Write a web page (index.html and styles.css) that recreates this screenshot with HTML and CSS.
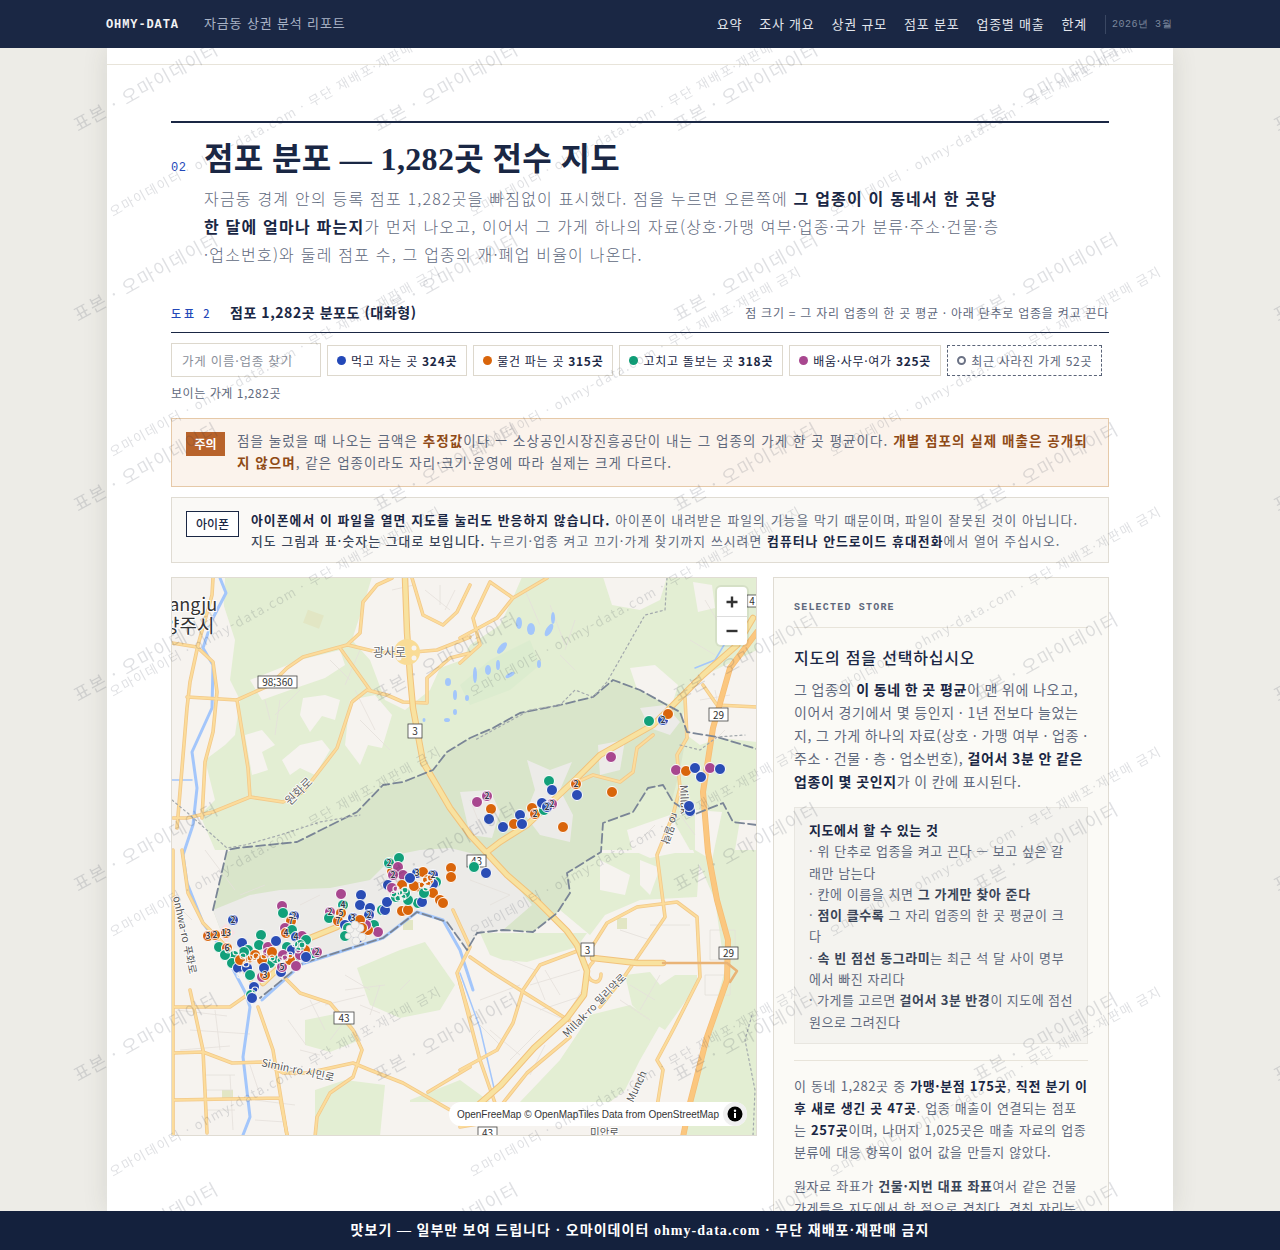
FILE: index.html
```html
<!DOCTYPE html>
<html lang="ko">
<head>
    <meta charset="UTF-8">
    <title>자금동 상권 분석 리포트</title>
    <link rel="stylesheet" href="styles.css">
</head>
<body>
    <header class="topbar">
        <div class="topbar-inner">
            <span class="brand">OHMY-DATA</span>
            <span class="report-name">자금동 상권 분석 리포트</span>
            <nav class="topnav">
                <a>요약</a><a>조사 개요</a><a>상권 규모</a><a>점포 분포</a><a>업종별 매출</a><a>한계</a>
            </nav>
            <span class="issue-date">2026년 3월</span>
        </div>
    </header>

    <main class="sheet">
        <div class="prev-end"></div>
        <section class="section">
            <div class="section-head">
                <span class="section-no">02</span>
                <h2>점포 분포 — 1,282곳 전수 지도</h2>
            </div>
            <p class="lede">자금동 경계 안의 등록 점포 1,282곳을 빠짐없이 표시했다. 점을 누르면 오른쪽에 <strong>그 업종이 이 동네서 한 곳당 한 달에 얼마나 파는지</strong>가 먼저 나오고, 이어서 그 가게 하나의 자료(상호·가맹 여부·업종·국가 분류·주소·건물·층·업소번호)와 둘레 점포 수, 그 업종의 개·폐업 비율이 나온다.</p>

            <div class="fig-head">
                <span class="fig-no">도표 2</span>
                <span class="fig-title">점포 1,282곳 분포도 (대화형)</span>
                <span class="fig-note">점 크기 = 그 자리 업종의 한 곳 평균 · 아래 단추로 업종을 켜고 끈다</span>
            </div>

            <div class="filters">
                <input class="store-search" type="text" placeholder="가게 이름·업종 찾기">
                <button class="chip"><i class="dot food"></i><span>먹고 자는 곳 <b>324곳</b></span></button>
                <button class="chip"><i class="dot retail"></i><span>물건 파는 곳 <b>315곳</b></span></button>
                <button class="chip"><i class="dot care"></i><span>고치고 돌보는 곳 <b>318곳</b></span></button>
                <button class="chip"><i class="dot misc"></i><span>배움·사무·여가 <b>325곳</b></span></button>
                <button class="chip chip-closed"><i class="dot closed"></i><span>최근 사라진 가게 52곳</span></button>
            </div>
            <div class="visible-count">보이는 가게 1,282곳</div>

            <div class="notice notice-warn">
                <span class="notice-tag">주의</span>
                <p>점을 눌렀을 때 나오는 금액은 <strong>추정값</strong>이다 — 소상공인시장진흥공단이 내는 그 업종의 가게 한 곳 평균이다. <strong>개별 점포의 실제 매출은 공개되지 않으며</strong>, 같은 업종이라도 자리·크기·운영에 따라 실제는 크게 다르다.</p>
            </div>
            <div class="notice notice-phone">
                <span class="notice-tag">아이폰</span>
                <p><strong>아이폰에서 이 파일을 열면 지도를 눌러도 반응하지 않습니다.</strong> 아이폰이 내려받은 파일의 기능을 막기 때문이며, 파일이 잘못된 것이 아닙니다. <em>지도 그림과 표·숫자는 그대로 보입니다.</em> 누르기·업종 켜고 끄기·가게 찾기까지 쓰시려면 <strong>컴퓨터나 안드로이드 휴대전화</strong>에서 열어 주십시오.</p>
            </div>

            <div class="map-layout">
                <div class="map">
                    <svg class="map-canvas" viewBox="171 577 586 559" xmlns="http://www.w3.org/2000/svg">
                        <defs>
                            <g id="roads-minor">
                                <path d="M205 850l30 40M172 900l20 20M177 1010l50 6M190 1030l60 4M180 1050l50-4M215 1010l5 40M230 1075l3 55M205 1075h30M205 1090h28M205 1110h30M250 1065l10 30M255 1100l40 5M255 1120l30 2M288 1020l18 25M300 1010l20-8M310 1000l15 30M325 1005l40-10M345 990l40-5M345 975l25 15M360 1005l20 8M380 985l-10 30M400 990l10-10M300 1050l20 5M330 1040l15-20"/>
                                <path d="M480 1000l40-15M510 960l25 10M530 985l50-15M535 975l10 25M545 970l15 25M520 1000l45 20M490 1030l30 25M500 1045l-20-20M510 1060l30-30M530 1075l15-30M540 1010l45-15M585 985l-15 25M630 985l25 15M640 1010l20-35M620 1000l30 20M650 925l40 0M620 930l30 10M710 930h25v30h-25zM705 975h25v20h-25z"/>
                                <path d="M392 590l22-5M425 590l25 20M440 585v20M455 590l-10 20M360 650l-15 35M330 660l20 20M300 690l-25 25M265 700l5 20M280 700l-5 35M355 690l20 40M360 720l30 30M525 590l15 35M550 605l15 40M575 620l-10 30M560 655l15 15M705 600l15 25M690 640l25 15M700 700l30-5M715 690l5 25M725 730l-10 10"/>
                                <path d="M470 800l10 25M480 845l20 20M470 880l40 15M490 905l20-10M680 815l15 20M640 840l15-15M300 905l20-10M240 895l25-10"/>
                            </g>
                            <g id="roads-second">
                                <path d="M213 578l-1 17-14 50-8 37-3 26-7 84-3 36"/>
                                <path d="M172 643l25 4 16 15 4 30-4 40-8 30-3 56"/>
                                <path d="M187 697l50 3 33-15 17-17 16-11 44-12 13-12 3-31 14-17 15-7"/>
                                <path d="M237 700l11 68 2 29 33 5 20-10 34-44 15-46 15-12 20 5 16 7 24 1v-25l23-20 20-5"/>
                                <path d="M340 648l30 42"/>
                                <path d="M348 645l29 7 26 1 34-3 33-13"/>
                                <path d="M250 797l-37 15-26 6h-14"/>
                                <path d="M412 578l11 37 20 10 14-13 13-27"/>
                                <path d="M460 638l37-20 16-20 34-20M490 582l23 16M490 582l-17 36 7 27-20 18"/>
                                <path d="M685 698l2 40-10 17 3 33-7 27-16 40 8 62-41 60-24 30"/>
                                <path d="M703 685l14 20 40 2"/>
                                <path d="M653 735l-16 13-4 24-13 10-27-7-16 7"/>
                                <path d="M182 850l6 43 15 30 20 20 29 39"/>
                                <path d="M172 1007h58l20-14M258 1007l15 43 14 85"/>
                                <path d="M285 978l15 15 30 10 23 27 9 20-9 27-23 16-13 24-2 20"/>
                                <path d="M172 1053l31-1 29 11 31-1 20 11h24l46-10 17 7 33 13 47 27"/>
                                <path d="M190 990l13 60 4 83M173 1100l107-2M280 1098l7 37M173 850v287"/>
                                <path d="M428 1092l42-25M453 910l17 37-13 26 13 44M470 957l23 16 80 50"/>
                                <path d="M580 950l-40 15-17 25-10 33-16 27-37 20"/>
                                <path d="M590 950l17-27 30-16 40-5 20 15 3 60-27 53-16 30 6 10-6 37"/>
                                <path d="M570 1037l-43 36-24 30M460 983l20 77 15 43M460 1127l30-5"/>
                                <path d="M593 962c-6 6-8 12-2 18 6 4 10 1 10-6"/>
                            </g>
                            <g id="roads-trunk">
                                <path d="M405 578l2 54 3 43 3 33 10 54 27 46 20 27 37 40 30 26 30 30 10 14 10 26-3 24-17 23-33 30-33 37-25 22"/>
                                <path d="M487 852l13-10 27-17 50-47 23-23 53-30 20-20 30-30 34-30 16-27"/>
                                <path d="M593 958l44 5h26"/>
                                <path d="M263 983l47-45 27-11"/>
                            </g>
                        </defs>

                        <rect class="land" x="171" y="577" width="586" height="559"/>

                        <!-- wood -->
                        <path class="wood" d="M225 577H757V850H171V815L205 800 210 700 222 640Z"/>
                        <path class="wood" d="M693 850H757V1136H683L700 1060 725 970 715 900Z"/>
                        <path class="wood" d="M480 933H587L577 947 527 962 503 960 490 955Z"/>
                        <path class="wood" d="M555 853H700L697 897 640 900 605 915 590 935 560 910 540 885Z"/>
                        <path class="wood" d="M625 975L650 972 660 985 675 975 697 975 697 985 665 1030 645 1018 632 1005Z"/>
                        <path class="wood" d="M590 1015L630 1005 660 1025 640 1060 625 1090 610 1102H520L560 1060Z"/>
                        <path class="wood" d="M357 968L400 950 425 942 455 985 440 1010 400 1018 370 1005Z"/>
                        <path class="wood" d="M305 1020L345 1012 360 1040 330 1052 305 1045Z"/>
                        <path class="wood" d="M315 1090L345 1080 385 1085 380 1136H315Z"/>
                        <path class="wood" d="M410 1100L460 1080 490 1102H410Z"/>
                        <path class="wood" d="M205 760L225 745 240 790 210 810Z"/>

                        <!-- built-up patches cut into the wood -->
                        <path class="land" d="M372 577H522L512 600 500 625 470 645 462 660 440 668 430 690 405 710 385 700 370 660 352 640 365 600Z"/>
                        <path class="land" d="M171 577H225L222 600 235 640 230 680 240 700 235 735 225 745 205 760 215 800 200 815 215 850H171Z"/>
                        <path class="land" d="M250 680L300 660 340 650 345 665 325 678 290 690 262 700Z"/>
                        <path class="land" d="M303 698L325 695 340 700 335 720 322 716 310 732 300 715Z"/>
                        <path class="land" d="M300 745L322 740 330 750 315 775 300 768 290 775 282 760Z"/>
                        <path class="land" d="M245 735L262 730 275 745 262 752 268 770 252 775Z"/>
                        <path class="land" d="M350 700L375 695 392 715 382 748 368 745 360 765 345 745Z"/>
                        <path class="land" d="M603 577H667L660 600 640 610 612 605Z"/>
                        <path class="land" d="M693 582L712 585 715 608 698 612Z"/>
                        <path class="land" d="M630 668L655 665 678 685 672 705 650 697 638 692Z"/>
                        <path class="land" d="M690 682L757 650V742L720 738 700 745 680 730Z"/>
                        <path class="land" d="M590 740L615 735 640 745 628 765 600 770Z"/>
                        <path class="land" d="M627 830L670 815 690 850 650 858 632 850Z"/>
                        <path class="land" d="M695 810L722 812 712 860 695 850Z"/>
                        <path class="land" d="M740 820H757V850H735Z"/>
                        <path class="land" d="M600 860L630 875 625 895 600 890Z"/>
                        <path class="land" d="M640 860L660 868 650 895 640 885Z"/>

                        <!-- park -->
                        <path class="park" d="M227 852L237 848 297 842 337 822 357 812 383 785 403 782 433 770 447 752 470 738 493 728 520 713 560 705 593 697 613 680 640 690 667 705 680 712 687 732 680 770 672 800 663 785 648 788 633 812 603 823 601 852 567 873 570 893 557 913 533 932 503 930 477 933 467 950 447 922 417 912 383 938 303 963 260 998 228 950 213 910Z"/>
                        <path class="town" d="M213 910L250 895 280 890 330 888 370 880 395 855 420 850 450 848 490 858 510 878 532 905 503 930 477 933 467 950 447 922 417 912 383 938 303 963 260 998 228 950Z"/>
                        <path class="town" d="M460 792L490 790 500 812 492 838 470 835Z"/>
                        <path class="town" d="M527 760L550 770 572 762 560 790 573 815 570 842 540 835 525 815 535 790Z"/>
                        <path class="town" d="M640 708L665 705 680 722 670 735 650 728Z"/>
                        <path class="town" d="M598 745L625 740 620 770 600 775Z"/>

                        <path class="golf" d="M460 685L490 660 530 640 540 665 510 690 470 705Z"/>
                        <rect class="pitch" x="305" y="612" width="17" height="14" transform="rotate(20 313 619)"/>
                        <rect class="pitch" x="617" y="918" width="10" height="11"/>
                        <rect class="pitch" x="403" y="920" width="10" height="10"/>
                        <rect class="pitch" x="222" y="1090" width="11" height="10"/>
                        <rect class="clinic" x="220" y="926" width="13" height="13" transform="rotate(45 226 932)"/>

                        <use href="#roads-minor" class="road-minor"/>

                        <!-- water -->
                        <path class="river" d="M220 578l6 15-13 25-10 30 10 17-1 43-20 44 5 36-4 37-10 30 4 28 16 40 20 27 22 42 5 15-7 50 7 60-7 18"/>
                        <path class="river" d="M262 1000l40-36 81-26 34-26 26 8 17 30 13 40"/>
                        <path class="river river-thin" d="M172 780h20M750 620l-20 15-15 25-20 8M460 973l20 55 14 60"/>
                        <g class="pond">
                            <ellipse cx="519" cy="623" rx="3" ry="6"/><ellipse cx="531" cy="629" rx="4" ry="6"/><ellipse cx="549" cy="630" rx="3" ry="7" transform="rotate(30 549 630)"/><ellipse cx="553" cy="618" rx="2" ry="6"/><ellipse cx="502" cy="648" rx="3" ry="7" transform="rotate(40 502 648)"/><ellipse cx="475" cy="675" rx="2" ry="8"/><ellipse cx="488" cy="670" rx="3" ry="5"/><ellipse cx="498" cy="665" rx="2" ry="5"/><ellipse cx="510" cy="675" rx="5" ry="2" transform="rotate(-30 510 675)"/><ellipse cx="539" cy="664" rx="2" ry="4"/><ellipse cx="467" cy="698" rx="2" ry="3"/><ellipse cx="448" cy="682" rx="3" ry="4"/><ellipse cx="455" cy="695" rx="2" ry="5"/><ellipse cx="455" cy="712" rx="2" ry="3"/><ellipse cx="447" cy="720" rx="3" ry="2"/><ellipse cx="424" cy="720" rx="1.5" ry="2"/>
                        </g>

                        <use href="#roads-second" class="road-second-case"/>
                        <use href="#roads-second" class="road-second"/>
                        <use href="#roads-trunk" class="road-trunk-case"/>
                        <use href="#roads-trunk" class="road-trunk"/>
                        <path class="road-big-case" d="M757 632l-27 36-17 60-10 64 5 60 9 48 11 40-1 40-20 57-17 66-7 34"/>
                        <path class="road-big" d="M757 632l-27 36-17 60-10 64 5 60 9 48 11 40-1 40-20 57-17 66-7 34"/>
                        <path class="road-ramp" d="M663 963h64l10 8-7 11"/>
                        <circle class="road-hub" cx="407" cy="652" r="13"/>
                        <circle class="road-hole" cx="399" cy="648" r="2.5"/><circle class="road-hole" cx="414" cy="648" r="2.5"/><circle class="road-hole" cx="399" cy="658" r="2.5"/><circle class="road-hole" cx="414" cy="658" r="2.5"/>

                        <!-- boundaries -->
                        <path class="line-dash" d="M213 910L227 850 237 848 297 842 337 822 357 812 383 785 403 782 433 770 447 752 470 738 493 728 520 713 560 705 593 697 613 680 640 690 667 705 680 712 687 732 717 737 757 749"/>
                        <path class="line-dash" d="M757 825L733 822 723 803 693 815 673 802 663 785 648 788 633 812 603 823 601 852 567 873 570 893 557 913 533 932 503 930 477 933 467 950 447 922 417 912 383 938 303 963 260 998"/>
                        <path class="line-dot" d="M667 578L665 610 645 615 607 682 593 697 575 690 560 705 530 710 475 740M172 800L190 815 227 848 245 845 280 835 320 822 360 815M680 745L700 750 717 737 745 735M752 1015L745 1040 755 1090 753 1136"/>

                        <!-- labels -->
                        <text class="place" x="161" y="611">Yangju</text>
                        <text class="place place-ko" x="162" y="633">양주시</text>
                        <text class="road-name" x="373" y="657">광사로</text>
                        <text class="road-name" transform="translate(290 806) rotate(-45)">원화로</text>
                        <text class="road-name small" transform="translate(261 1066) rotate(12)">Simin-ro 시민로</text>
                        <text class="road-name small" transform="translate(567 1038) rotate(-45)">Millak-ro 밀리악로</text>
                        <text class="road-name small" transform="translate(633 1103) rotate(-65)">Munch</text>
                        <text class="road-name small" transform="translate(680 785) rotate(88)">Millak</text>
                        <text class="road-name small" transform="translate(672 812) rotate(110)">ro 밀락</text>
                        <text class="road-name small" transform="translate(173 897) rotate(78)">onhwa-ro 푸화로</text>
                        <text class="road-name small" x="590" y="1136">미안로</text>

                        <g class="shields">
                            <rect x="258" y="676" width="39" height="12"/><text x="277.5" y="686">98;360</text>
                            <rect x="408" y="724" width="14" height="14"/><text x="415" y="735">3</text>
                            <rect x="709" y="708" width="19" height="13"/><text x="718.5" y="718.500">29</text>
                            <rect x="334" y="1012" width="20" height="12"/><text x="344" y="1022">43</text>
                            <rect x="581" y="943" width="13" height="13"/><text x="587.500" y="953.500">3</text>
                            <rect x="719" y="947" width="19" height="12"/><text x="728.500" y="957">29</text>
                            <rect x="467" y="855" width="19" height="12"/><text x="476.500" y="865">43</text>
                            <rect x="478" y="1127" width="19" height="12"/><text x="487.500" y="1137">43</text>
                            <rect x="747" y="595" width="14" height="12"/><text x="752" y="605">4</text>
                        </g>

                        <!-- stores -->
                        <g class="stores">
                            <circle class="b" cx="663" cy="720" r="5"/><circle class="o" cx="668" cy="714" r="5"/><circle class="g" cx="649" cy="721" r="5"/>
                            <circle class="m" cx="611" cy="757" r="5"/><circle class="m" cx="676" cy="770" r="5"/><circle class="o" cx="686" cy="771" r="5"/><circle class="b" cx="695" cy="768" r="5"/><circle class="b" cx="701" cy="777" r="5"/><circle class="m" cx="710" cy="768" r="5"/><circle class="b" cx="720" cy="769" r="5"/>
                            <circle class="b" cx="690" cy="811" r="5"/><circle class="b" cx="689" cy="806" r="5"/>
                            <circle class="g" cx="549" cy="781" r="5"/><circle class="b" cx="552" cy="790" r="5"/><circle class="o" cx="576" cy="784" r="5"/><circle class="b" cx="577" cy="795" r="5"/><circle class="o" cx="612" cy="792" r="5"/><circle class="o" cx="563" cy="827" r="5"/>
                            <circle class="m" cx="477" cy="802" r="5"/><circle class="m" cx="487" cy="796" r="5"/><circle class="o" cx="491" cy="809" r="5"/><circle class="b" cx="489" cy="819" r="5"/><circle class="b" cx="503" cy="827" r="5"/><circle class="o" cx="514" cy="824" r="5"/><circle class="b" cx="520" cy="815" r="5"/><circle class="b" cx="522" cy="824" r="5"/><circle class="o" cx="532" cy="808" r="5"/><circle class="o" cx="535" cy="814" r="5"/><circle class="g" cx="544" cy="810" r="5"/><circle class="b" cx="542" cy="803" r="5"/><circle class="m" cx="552" cy="804" r="5"/><circle class="b" cx="547" cy="807" r="5"/>
                            <circle class="g" cx="474" cy="867" r="5"/><circle class="b" cx="486" cy="873" r="5"/><circle class="o" cx="451" cy="868" r="5"/><circle class="o" cx="451" cy="877" r="5"/>

                            <circle class="o" cx="392" cy="872" r="5"/><circle class="g" cx="399" cy="858" r="5"/><circle class="g" cx="389" cy="863" r="5"/><circle class="m" cx="398" cy="867" r="5"/><circle class="m" cx="403" cy="875" r="5"/><circle class="m" cx="393" cy="875" r="5"/><circle class="b" cx="388" cy="885" r="5"/><circle class="b" cx="417" cy="873" r="5"/><circle class="o" cx="423" cy="872" r="5"/><circle class="b" cx="433" cy="875" r="5"/><circle class="g" cx="436" cy="882" r="5"/><circle class="b" cx="433" cy="884" r="5"/><circle class="o" cx="420" cy="887" r="5"/><circle class="o" cx="433" cy="893" r="5"/><circle class="o" cx="440" cy="900" r="5"/><circle class="o" cx="443" cy="903" r="5"/><circle class="o" cx="414" cy="886" r="5"/><circle class="g" cx="418" cy="903" r="5"/><circle class="b" cx="422" cy="902" r="5"/><circle class="o" cx="402" cy="911" r="5"/><circle class="o" cx="408" cy="910" r="5"/><circle class="g" cx="408" cy="900" r="5"/><circle class="g" cx="382" cy="910" r="5"/><circle class="b" cx="385" cy="910" r="5"/><circle class="b" cx="387" cy="902" r="5"/><circle class="m" cx="395" cy="895" r="5"/><circle class="o" cx="402" cy="885" r="5"/><circle class="g" cx="396" cy="897" r="5"/>
                            <circle class="o" cx="428" cy="880" r="5"/><circle class="g" cx="424" cy="893" r="5"/><circle class="b" cx="410" cy="878" r="5"/><circle class="m" cx="392" cy="888" r="5"/><circle class="g" cx="405" cy="893" r="5"/>

                            <circle class="m" cx="341" cy="894" r="5"/><circle class="b" cx="361" cy="895" r="5"/><circle class="b" cx="360" cy="905" r="5"/><circle class="b" cx="370" cy="908" r="5"/><circle class="g" cx="343" cy="905" r="5"/><circle class="m" cx="330" cy="912" r="5"/><circle class="g" cx="329" cy="918" r="5"/><circle class="o" cx="341" cy="913" r="5"/><circle class="o" cx="338" cy="921" r="5"/><circle class="b" cx="369" cy="915" r="5"/><circle class="b" cx="353" cy="918" r="5"/><circle class="g" cx="374" cy="925" r="5"/><circle class="m" cx="378" cy="932" r="5"/><circle class="o" cx="368" cy="930" r="5"/><circle class="m" cx="366" cy="925" r="5"/><circle class="b" cx="345" cy="925" r="5"/><circle class="o" cx="360" cy="920" r="5"/>
                            <circle class="g" cx="348" cy="928" r="5"/><circle class="o" cx="362" cy="928" r="5"/><circle class="b" cx="358" cy="938" r="5"/><circle class="g" cx="345" cy="936" r="5"/>

                            <circle class="m" cx="282" cy="906" r="5"/><circle class="g" cx="283" cy="913" r="5"/><circle class="b" cx="294" cy="916" r="5"/><circle class="o" cx="291" cy="921" r="5"/><circle class="m" cx="285" cy="928" r="5"/><circle class="o" cx="286" cy="933" r="5"/><circle class="g" cx="292" cy="930" r="5"/><circle class="b" cx="296" cy="937" r="5"/><circle class="m" cx="302" cy="936" r="5"/><circle class="g" cx="306" cy="940" r="5"/><circle class="b" cx="233" cy="920" r="5"/>
                            <circle class="o" cx="208" cy="936" r="5"/><circle class="o" cx="215" cy="935" r="5"/><circle class="o" cx="226" cy="933" r="5"/><circle class="g" cx="219" cy="947" r="5"/><circle class="b" cx="242" cy="943" r="5"/><circle class="g" cx="261" cy="935" r="5"/><circle class="g" cx="259" cy="945" r="5"/><circle class="m" cx="268" cy="947" r="5"/><circle class="b" cx="276" cy="941" r="5"/><circle class="g" cx="287" cy="947" r="5"/><circle class="o" cx="227" cy="948" r="5"/><circle class="g" cx="234" cy="956" r="5"/><circle class="g" cx="232" cy="963" r="5"/><circle class="m" cx="268" cy="953" r="5"/>
                            <circle class="g" cx="313" cy="953" r="5"/><circle class="m" cx="317" cy="952" r="5"/><circle class="m" cx="262" cy="977" r="5"/><circle class="o" cx="265" cy="975" r="5"/><circle class="b" cx="281" cy="972" r="5"/><circle class="m" cx="282" cy="967" r="5"/><circle class="g" cx="248" cy="950" r="5"/><circle class="o" cx="248" cy="958" r="5"/><circle class="b" cx="238" cy="968" r="5"/><circle class="b" cx="247" cy="968" r="5"/><circle class="g" cx="250" cy="975" r="5"/><circle class="b" cx="254" cy="987" r="5"/><circle class="g" cx="251" cy="995" r="5"/><circle class="b" cx="252" cy="998" r="5"/><circle class="g" cx="270" cy="963" r="5"/><circle class="o" cx="255" cy="955" r="5"/><circle class="g" cx="295" cy="958" r="5"/><circle class="b" cx="292" cy="950" r="5"/><circle class="o" cx="290" cy="960" r="5"/><circle class="m" cx="296" cy="966" r="5"/><circle class="g" cx="276" cy="958" r="5"/><circle class="o" cx="305" cy="950" r="5"/><circle class="m" cx="300" cy="955" r="5"/><circle class="b" cx="306" cy="957" r="5"/>
                            <circle class="o" cx="240" cy="960" r="5"/><circle class="g" cx="244" cy="952" r="5"/><circle class="o" cx="262" cy="960" r="5"/><circle class="m" cx="283" cy="955" r="5"/><circle class="g" cx="225" cy="955" r="5"/><circle class="o" cx="272" cy="952" r="5"/><circle class="g" cx="300" cy="945" r="5"/><circle class="b" cx="264" cy="968" r="5"/>

                            <!-- overlapping spots, dense blobs of white rim -->
                            <g class="rims">
                                <circle cx="425" cy="880" r="3"/><circle cx="428" cy="884" r="3"/><circle cx="422" cy="885" r="3"/><circle cx="426" cy="888" r="3"/><circle cx="430" cy="878" r="3"/>
                                <circle cx="396" cy="889" r="3"/><circle cx="400" cy="893" r="3"/><circle cx="394" cy="894" r="3"/><circle cx="398" cy="898" r="3"/><circle cx="403" cy="897" r="3"/><circle cx="405" cy="890" r="3"/>
                                <circle class="solid" cx="355" cy="933" r="5"/><circle class="solid" cx="350" cy="929" r="4"/><circle class="solid" cx="360" cy="928" r="4"/><circle class="solid" cx="348" cy="936" r="3"/><circle class="solid" cx="362" cy="937" r="4"/><circle class="solid" cx="355" cy="925" r="4"/><circle class="solid" cx="356" cy="941" r="4"/>
                                <circle cx="295" cy="944" r="3"/><circle cx="298" cy="950" r="3"/><circle cx="290" cy="955" r="3"/><circle cx="285" cy="958" r="3"/><circle cx="280" cy="960" r="3"/><circle cx="272" cy="958" r="3"/><circle cx="264" cy="956" r="3"/><circle cx="256" cy="956" r="3"/><circle cx="250" cy="958" r="3"/><circle cx="243" cy="956" r="3"/><circle cx="236" cy="952" r="3"/><circle cx="228" cy="950" r="3"/><circle cx="302" cy="945" r="3"/><circle cx="246" cy="964" r="3"/><circle cx="240" cy="975" r="3"/><circle cx="255" cy="990" r="3"/>
                            </g>

                            <g class="counts">
                                <text x="663" y="723">2</text><text x="576" y="787">2</text><text x="487" y="799">2</text><text x="535" y="817">2</text><text x="547" y="810">2</text><text x="552" y="807">2</text>
                                <text x="389" y="866">2</text><text x="393" y="878">2</text><text x="433" y="878">2</text><text x="417" y="876">3</text><text x="369" y="918">2</text><text x="353" y="921">3</text><text x="343" y="908">4</text><text x="338" y="924">7</text><text x="341" y="916">5</text><text x="330" y="915">2</text>
                                <text x="233" y="923">2</text><text x="208" y="939">3</text><text x="215" y="938">2</text><text x="226" y="936">13</text><text x="294" y="919">2</text><text x="291" y="924">7</text><text x="286" y="936">4</text><text x="265" y="978">3</text><text x="282" y="970">5</text><text x="317" y="955">2</text><text x="296" y="940">4</text><text x="227" y="951">6</text>
                            </g>
                        </g>
                    </svg>
                    <div class="zoom-ctrl">
                        <button class="zoom-btn">
                            <svg width="14" height="14" viewBox="0 0 14 14"><path d="M7 1.500v11M1.500 7h11"/></svg>
                        </button>
                        <button class="zoom-btn">
                            <svg width="14" height="14" viewBox="0 0 14 14"><path d="M1.500 7h11"/></svg>
                        </button>
                    </div>
                    <div class="attrib">
                        <span>OpenFreeMap © OpenMapTiles Data from OpenStreetMap</span>
                        <span class="attrib-btn">
                            <svg width="16" height="16" viewBox="0 0 16 16"><circle cx="8" cy="8" r="7.500"/><rect class="ink" x="7" y="7" width="2" height="5"/><circle class="ink" cx="8" cy="4.800" r="1.200"/></svg>
                        </span>
                    </div>
                </div>

                <aside class="store-panel">
                    <div class="panel-kicker">SELECTED STORE</div>
                    <h3>지도의 점을 선택하십시오</h3>
                    <p class="panel-text">그 업종의 <strong>이 동네 한 곳 평균</strong>이 맨 위에 나오고, 이어서 경기에서 몇 등인지 · 1년 전보다 늘었는지, 그 가게 하나의 자료(상호 · 가맹 여부 · 업종 · 주소 · 건물 · 층 · 업소번호), <strong>걸어서 3분 안 같은 업종이 몇 곳인지</strong>가 이 칸에 표시된다.</p>
                    <div class="howto">
                        <div class="howto-title">지도에서 할 수 있는 것</div>
                        <div>· 위 단추로 업종을 켜고 끈다 — 보고 싶은 갈래만 남는다</div>
                        <div>· 칸에 이름을 치면 <b>그 가게만 찾아 준다</b></div>
                        <div>· <b>점이 클수록</b> 그 자리 업종의 한 곳 평균이 크다</div>
                        <div>· <b>속 빈 점선 동그라미</b>는 최근 석 달 사이 명부에서 빠진 자리다</div>
                        <div class="howto-tight">· 가게를 고르면 <b>걸어서 3분 반경</b>이 지도에 점선 원으로 그려진다</div>
                    </div>
                    <p class="panel-note">이 동네 1,282곳 중 <strong>가맹·분점 175곳</strong>, <strong>직전 분기 이후 새로 생긴 곳 47곳</strong>. 업종 매출이 연결되는 점포는 <strong>257곳</strong>이며, 나머지 1,025곳은 매출 자료의 업종 분류에 대응 항목이 없어 값을 만들지 않았다.</p>
                    <p class="panel-note">원자료 좌표가 <b>건물·지번 대표 좌표</b>여서 같은 건물 가게들은 지도에서 한 점으로 겹친다. 겹친 자리는 숫자로 표시했다.</p>
                </aside>
            </div>
        </section>
    </main>

    <footer class="preview-bar">맛보기 — 일부만 보여 드립니다 · 오마이데이터 ohmy-data.com · 무단 재배포·재판매 금지</footer>

    <svg class="watermark" width="1280" height="1250" xmlns="http://www.w3.org/2000/svg">
        <defs>
            <pattern id="wm-a" patternUnits="userSpaceOnUse" width="300" height="190">
                <text class="wm-big" transform="translate(78 132) rotate(-29)">표본 · 오마이데이터</text>
            </pattern>
            <pattern id="wm-b" patternUnits="userSpaceOnUse" x="107" width="360" height="240">
                <text class="wm-long" transform="translate(6 217) rotate(-29)">오마이데이터 · ohmy-data.com · 무단 재배포·재판매 금지</text>
            </pattern>
        </defs>
        <rect width="1280" height="1250" fill="url(#wm-a)"/>
        <rect x="107" width="1066" height="1250" fill="url(#wm-b)"/>
    </svg>
</body>
</html>
```

FILE: styles.css
```css
html, body {
    height: 100%;
}
body {
    margin: 0;
    display: flex;
    flex-direction: column;
    overflow: hidden;
    position: relative;
    background-color: #edece7;
    color: #5f697d;
    font-family: "Noto Sans CJK KR", "Noto Sans", sans-serif;
    font-size: 14px;
    letter-spacing: 0.075em;
}
strong, .notice strong {
    color: #1a2744;
    font-weight: 700;
}

/* top bar */
.topbar {
    position: relative;
    z-index: 10;
    flex: 0 0 48px;
    background-color: #1a2744;
}
.topbar-inner {
    width: 1068px;
    height: 48px;
    margin: 0 auto;
    display: flex;
    align-items: center;
}
.brand {
    width: 98px;
    margin-top: 1px;
    color: #f2f3f5;
    font-family: "Liberation Mono", monospace;
    font-size: 12px;
    font-weight: 700;
    letter-spacing: 0.9px;
}
.report-name {
    margin-bottom: 3px;
    color: #a9b3c6;
    font-size: 13px;
    letter-spacing: 0.065em;
}
.topnav {
    margin-left: auto;
    display: flex;
    gap: 17px;
    padding-right: 18px;
    border-right: 1px solid #3a4762;
    line-height: 18px;
}
.topnav a {
    margin-bottom: 1px;
    color: #e3e6ec;
    font-size: 13px;
    letter-spacing: 0.06em;
}
.issue-date {
    padding-left: 6px;
    color: #7c879d;
    font-family: "Liberation Mono", monospace;
    font-size: 10px;
    width: 62px;
    letter-spacing: 0.5px;
    white-space: nowrap;
}

/* sheet */
.sheet {
    flex: 1;
    width: 1066px;
    margin: 0 auto;
    overflow: hidden;
    background-color: #fff;
    box-shadow: 0 0 24px rgba(60, 55, 40, 0.12);
}
.prev-end {
    height: 16px;
    border-bottom: 1px solid #e8e4da;
}
.section {
    margin: 56px 64px 0;
    border-top: 2px solid #1a2744;
}
.section-head {
    display: flex;
    align-items: flex-end;
    height: 50px;
    margin-top: 11px;
}
.section-no {
    width: 33px;
    padding-bottom: 9px;
    color: #2348b8;
    font-family: "Liberation Mono", monospace;
    font-size: 12px;
    letter-spacing: 0.5px;
}
h2 {
    margin: 0;
    color: #1a2744;
    font-family: "Liberation Serif", "Noto Sans CJK KR", serif;
    font-size: 32px;
    line-height: 50px;
    font-weight: 700;
    letter-spacing: 0.35px;
}
.lede {
    margin: 0 0 0 33px;
    max-width: 797px;
    font-size: 16px;
    line-height: 28px;
    font-weight: 300;
    letter-spacing: 0.075em;
}
.lede strong {
    font-weight: 700;
}

/* figure */
.fig-head {
    display: flex;
    align-items: baseline;
    margin-top: 33px;
    padding-bottom: 8px;
    border-bottom: 1px solid #1a2744;
    line-height: 22px;
}
.fig-no {
    width: 59px;
    color: #2348b8;
    font-size: 11px;
    font-weight: 500;
    letter-spacing: 3px;
}
.fig-title {
    color: #1a2744;
    font-size: 14px;
    font-weight: 700;
    letter-spacing: 0.04em;
}
.fig-note {
    margin-left: auto;
    font-size: 12px;
    letter-spacing: 0.0625em;
}
.filters {
    display: flex;
    align-items: center;
    gap: 6px;
    margin-top: 10px;
}
.store-search {
    flex: none;
    width: 150px;
    height: 34px;
    box-sizing: border-box;
    padding: 0 10px;
    border: 1px solid #ddd8cd;
    background-color: #fff;
    color: #1a2744;
    font-family: inherit;
    font-size: 12.500px;
    letter-spacing: 0.06em;
}
.store-search::placeholder {
    color: #8a8f9a;
}
.chip {
    flex: none;
    height: 31px;
    box-sizing: border-box;
    padding: 0 9px;
    display: flex;
    align-items: center;
    gap: 4px;
    border: 1px solid #ddd8cd;
    background-color: #fff;
    color: #1a2744;
    font-family: inherit;
    font-size: 12px;
    letter-spacing: 0.06em;
    white-space: nowrap;
}
.chip-closed {
    border: 1px dashed #5a6478;
    color: #5a6478;
}
.dot {
    flex: none;
    width: 9px;
    height: 9px;
    margin-right: 1px;
    border-radius: 50%;
}
.dot.food { background-color: #2348b8; }
.dot.retail { background-color: #d9650b; }
.dot.care { background-color: #0f9d76; }
.dot.misc { background-color: #a8478f; }
.dot.closed {
    box-sizing: border-box;
    border: 2px solid #6b7285;
}
.visible-count {
    margin-top: 7px;
    font-size: 12px;
    line-height: 18px;
    letter-spacing: 0.045em;
}

/* notices */
.notice {
    display: flex;
    align-items: flex-start;
    gap: 12px;
    box-sizing: border-box;
    border: 1px solid #e0dcd3;
}
.notice p {
    margin: 0;
}
.notice-warn {
    margin-top: 16px;
    height: 69px;
    padding: 10px 14px;
    border-color: #e6c9a8;
    background-color: #fbf3ec;
    font-size: 13.500px;
    line-height: 22px;
}
.notice-warn .notice-tag {
    flex: none;
    margin-top: 3px;
    width: 39px;
    height: 24px;
    background-color: #b8632b;
    color: #fff;
    font-size: 12px;
    font-weight: 700;
    line-height: 24px;
    letter-spacing: 0;
    text-align: center;
}
.notice-warn strong {
    color: #8f4a16;
}
.notice-phone {
    margin-top: 10px;
    height: 66px;
    padding: 11px 22px 11px 14px;
    background-color: #faf9f6;
    font-size: 12.800px;
    line-height: 21px;
    letter-spacing: 0.085em;
}
.notice-phone .notice-tag {
    flex: none;
    box-sizing: border-box;
    width: 53px;
    height: 26px;
    margin-top: 2px;
    border: 1px solid #1a2744;
    background-color: #fff;
    color: #1a2744;
    font-size: 12px;
    font-weight: 500;
    line-height: 24px;
    letter-spacing: 0;
    text-align: center;
}
.notice-phone em {
    color: #3a4558;
    font-style: normal;
    font-weight: 500;
}

/* map + side panel */
.map-layout {
    display: grid;
    grid-template-columns: 586px 336px;
    gap: 16px;
    align-items: start;
    margin-top: 14px;
}
.map {
    position: relative;
    height: 559px;
    overflow: hidden;
    outline: 1px solid #e0dcd3;
    outline-offset: -1px;
    letter-spacing: 0;
}
.map-canvas {
    display: block;
    width: 586px;
    height: 559px;
}
.land { fill: #f6f3ef; }
.wood { fill: #e3eed3; }
.park { fill: #d9e5ca; }
.town { fill: #ecebe8; }
.golf { fill: #dceccf; }
.pitch { fill: #e2e6c4; }
.clinic { fill: #fadfe3; }
.road-minor { fill: none; stroke: #e4dfda; stroke-width: 0.8; }
.road-second-case, .road-second, .road-trunk-case, .road-trunk,
.road-big-case, .road-big, .road-ramp, .river, .line-dash, .line-dot {
    fill: none;
    stroke-linejoin: round;
    stroke-linecap: round;
}
.road-second-case { stroke: #f2c98a; stroke-width: 3.600; }
.road-second { stroke: #fcdc9b; stroke-width: 2; }
.road-trunk-case { stroke: #f2c27b; stroke-width: 6.500; }
.road-trunk { stroke: #f8e2a0; stroke-width: 4.500; }
.road-big-case { stroke: #f6bd75; stroke-width: 6; }
.road-big { stroke: #fbc77f; stroke-width: 4.500; }
.road-ramp { stroke: #e9b376; stroke-width: 2.500; }
.road-hub { fill: #f9dc96; }
.road-hole { fill: #f6f3ef; }
.river { stroke: #a3c6fb; stroke-width: 3; }
.river-thin { stroke-width: 1.500; }
.pond { fill: #a3c6fb; }
.line-dash { stroke: #7a8596; stroke-width: 1.800; stroke-dasharray: 9 4; }
.line-dot { stroke: #a3a9ad; stroke-width: 1.200; stroke-dasharray: 2 3; }
.place {
    fill: #333;
    font-size: 18px;
    paint-order: stroke;
    stroke: #fff;
    stroke-width: 2px;
}
.place-ko {
    font-size: 19px;
}
.road-name {
    fill: #666;
    font-size: 12px;
    paint-order: stroke;
    stroke: #fff;
    stroke-width: 1.500px;
}
.road-name.small {
    font-size: 10.500px;
    fill: #555;
}
.shields rect {
    fill: #fff;
    stroke: #444;
    stroke-width: 0.8;
}
.shields text {
    fill: #333;
    font-size: 10px;
    text-anchor: middle;
}
.stores circle {
    stroke: #fff;
    stroke-width: 1;
}
.stores > circle {
    r: 5.500px;
}
.stores .b { fill: #2a4db5; }
.stores .o { fill: #d9650b; }
.stores .g { fill: #12a07a; }
.stores .m { fill: #a8478f; }
.rims circle {
    fill: none;
    stroke: #f4f2ee;
    stroke-width: 1.200;
}
.rims .solid {
    fill: #f3f2ef;
    stroke: #cfcfcf;
    stroke-width: 0.6;
}
.counts text {
    fill: #33384a;
    font-size: 8.500px;
    font-weight: 700;
    text-anchor: middle;
    paint-order: stroke;
    stroke: rgba(255, 255, 255, 0.85);
    stroke-width: 1.500px;
}
.zoom-ctrl {
    position: absolute;
    top: 10px;
    right: 10px;
    width: 30px;
    border-radius: 4px;
    background-color: #fff;
    box-shadow: 0 0 0 2px rgba(0, 0, 0, 0.06);
}
.zoom-btn {
    display: flex;
    align-items: center;
    justify-content: center;
    width: 30px;
    height: 29px;
    padding: 0;
    border: 0;
    background: none;
}
.zoom-btn + .zoom-btn {
    border-top: 1px solid #ddd;
}
.zoom-btn path {
    fill: none;
    stroke: #333;
    stroke-width: 2.400;
}
.attrib {
    position: absolute;
    right: 10px;
    bottom: 10px;
    height: 24px;
    display: flex;
    align-items: center;
    gap: 4px;
    padding-left: 8px;
    border-radius: 12px;
    background-color: #fff;
    color: #333;
    font-family: "Liberation Sans", sans-serif;
    font-size: 10px;
    white-space: nowrap;
}
.attrib-btn {
    display: flex;
    align-items: center;
    justify-content: center;
    width: 24px;
    height: 24px;
    border-radius: 50%;
    background-color: #f0f0f0;
}
.attrib-btn svg circle:first-child { fill: #000; }
.attrib-btn .ink { fill: #fff; }

.store-panel {
    box-sizing: border-box;
    padding: 23px 20px 20px;
    border: 1px solid #e0dcd3;
    background-color: #fbfaf6;
}
.panel-kicker {
    padding-bottom: 12px;
    border-bottom: 1px solid #e8e4da;
    font-family: "Liberation Mono", monospace;
    font-size: 10px;
    line-height: 14px;
    font-weight: 700;
    letter-spacing: 1.200px;
}
h3 {
    margin: 16px 0 0;
    color: #1a2744;
    font-size: 16px;
    line-height: 26px;
    font-weight: 500;
    letter-spacing: 0.05em;
}
.panel-text {
    margin: 8px 0 0;
    font-size: 14px;
    line-height: 23px;
    letter-spacing: 0.045em;
    word-spacing: -0.5px;
}
.howto {
    margin-top: 14px;
    padding: 11px 14px 11px;
    border: 1px solid #e8e6e0;
    background-color: #f4f3ef;
    font-size: 13px;
    line-height: 21.300px;
    letter-spacing: 0.044em;
}
.howto-title {
    color: #1a2744;
    font-weight: 700;
}
.howto-tight {
    word-spacing: -0.5px;
}
.howto b {
    color: #3a4558;
}
.panel-note {
    margin: 0;
    font-size: 13px;
    line-height: 22px;
    letter-spacing: 0.045em;
    word-spacing: 0.3px;
}
.howto + .panel-note {
    margin-top: 16px;
    padding-top: 14px;
    border-top: 1px solid #e8e4da;
}
.panel-note + .panel-note {
    margin-top: 12px;
}
.panel-note b {
    color: #3a4558;
}

/* bottom bar */
.preview-bar {
    position: relative;
    z-index: 10;
    flex: 0 0 39px;
    background-color: #14213d;
    color: #fff;
    font-family: "Liberation Serif", "Noto Sans CJK KR", serif;
    font-size: 14px;
    font-weight: 700;
    line-height: 39px;
    text-align: center;
}

/* sample watermark */
.watermark {
    position: absolute;
    left: 0;
    top: 0;
    z-index: 5;
    pointer-events: none;
}
.wm-big, .wm-long {
    fill: rgba(40, 50, 70, 0.15);
}
.wm-big {
    font-size: 18px;
    letter-spacing: 1.400px;
}
.wm-long {
    font-size: 13px;
    letter-spacing: 1.500px;
}
```
